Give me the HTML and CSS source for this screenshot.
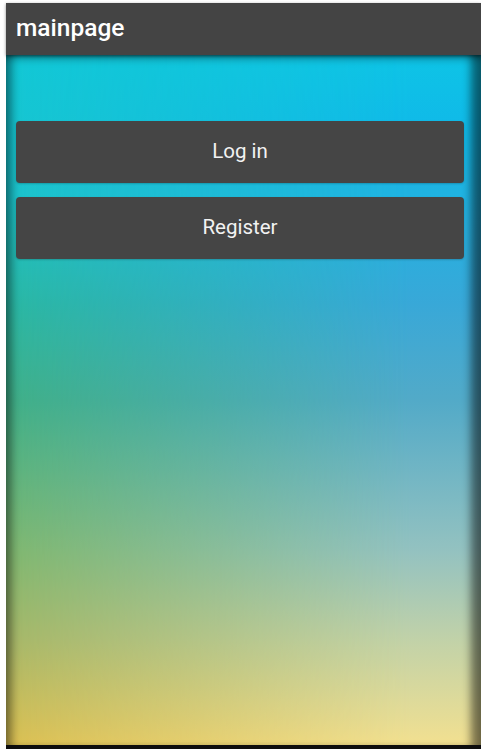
FILE: index.html
```html
<!DOCTYPE html>
<html>
<head>
<meta charset="utf-8">
<link rel="stylesheet" href="styles.css">
</head>
<body>
<div class="app">
  <header class="appbar">mainpage</header>
  <main class="content">
    <div class="actions">
      <button class="btn">Log in</button>
      <button class="btn">Register</button>
    </div>
  </main>
</div>
</body>
</html>
```
FILE: styles.css
```css
html, body {
  margin: 0;
  padding: 0;
  background: #ffffff;
}
body {
  padding: 3px 0 0 6px;
  height: 749px;
  box-sizing: border-box;
  overflow: hidden;
  font-family: Roboto, "Liberation Sans", sans-serif;
}
.app {
  display: flex;
  flex-direction: column;
  height: 746px;
  border-bottom: 4px solid #0d0d0d;
  box-sizing: border-box;
}
.appbar {
  height: 52px;
  flex: none;
  background: #444444;
  color: #ffffff;
  font-size: 24.5px;
  font-weight: 500;
  line-height: 50px;
  padding-left: 10px;
  position: relative;
  z-index: 2;
  box-shadow: 0 1px 3px rgba(0,0,0,0.45);
}
.content {
  flex: 1;
  position: relative;
  background: linear-gradient(to bottom, #12c8d6 0%, #1cc4cc 20%, #2ab8a4 36%, #40b088 50%, #80b870 72%, #a8b868 85%, #dcc052 100%);
  padding: 66px 17px 0 10px;
}
.content::before {
  content: "";
  position: absolute;
  inset: 0;
  background: linear-gradient(to bottom, #0ec4e6 0%, #10bae8 10%, #38a8d8 36%, #52aac8 50%, #94c2c0 72%, #c2d2a8 85%, #f2e090 100%);
  -webkit-mask-image: linear-gradient(to right, transparent 0%, rgba(0,0,0,0.35) 30%, #000 85%);
  mask-image: linear-gradient(to right, transparent 0%, rgba(0,0,0,0.35) 30%, #000 85%);
}
.content::after {
  content: "";
  position: absolute;
  inset: 0;
  pointer-events: none;
  box-shadow: inset 11px 0 8px -5px rgba(0,0,0,0.4), inset -15px 0 8px -5px rgba(0,0,0,0.5), inset 0 7px 8px -4px rgba(0,0,0,0.4);
}
.actions {
  position: relative;
  z-index: 1;
  display: flex;
  flex-direction: column;
  gap: 14px;
}
.btn {
  height: 62px;
  border: none;
  border-radius: 4px;
  background: #454545;
  color: #f2f2f2;
  font-family: Roboto, "Liberation Sans", sans-serif;
  font-size: 20.5px;
  padding: 0 0 2px;
  box-shadow: 0 1px 2px rgba(0,0,0,0.2);
}
```
